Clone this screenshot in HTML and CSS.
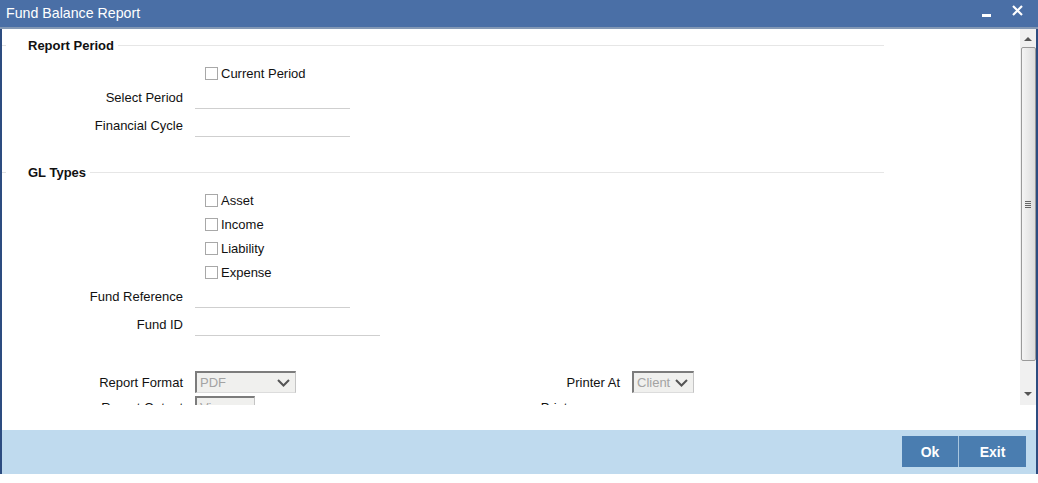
FILE: index.html
```html
<!DOCTYPE html>
<html>
<head>
<meta charset="utf-8">
<link rel="stylesheet" href="styles.css">
</head>
<body>
<div class="window">
  <div class="titlebar">
    <span class="title">Fund Balance Report</span>
    <div class="winctl">
      <span class="min"></span>
      <svg class="close" width="11" height="11" viewBox="0 0 11 11"><path d="M1 1 L10 10 M10 1 L1 10" stroke="#fff" stroke-width="2.2" fill="none"/></svg>
    </div>
  </div>
  <div class="body">
    <div class="scroll">
      <div class="content">
        <div class="legend l1"><span>Report Period</span></div>
        <div class="row cbrow first"><div class="lbl"></div><div class="field cbfield"><span class="cb"></span><span>Current Period</span></div></div>
        <div class="row inrow r-sel"><div class="lbl">Select Period</div><div class="input"></div></div>
        <div class="row inrow r-fin"><div class="lbl">Financial Cycle</div><div class="input"></div></div>

        <div class="legend l2"><span>GL Types</span></div>
        <div class="row cbrow gl1"><div class="lbl"></div><div class="field cbfield"><span class="cb"></span><span>Asset</span></div></div>
        <div class="row cbrow"><div class="lbl"></div><div class="field cbfield"><span class="cb"></span><span>Income</span></div></div>
        <div class="row cbrow"><div class="lbl"></div><div class="field cbfield"><span class="cb"></span><span>Liability</span></div></div>
        <div class="row cbrow"><div class="lbl"></div><div class="field cbfield"><span class="cb"></span><span>Expense</span></div></div>
        <div class="row inrow r-fref"><div class="lbl">Fund Reference</div><div class="input"></div></div>
        <div class="row inrow r-fid"><div class="lbl">Fund ID</div><div class="input wide"></div></div>

        <div class="row selrow r-fmt">
          <div class="lbl">Report Format</div>
          <div class="select w101"><span>PDF</span><svg class="chev" width="13" height="8" viewBox="0 0 13 8"><path d="M1 1 L6.5 6.5 L12 1" stroke="#555" stroke-width="2" fill="none"/></svg></div>
          <div class="lbl rlbl">Printer At</div>
          <div class="select w62"><span>Client</span><svg class="chev" width="13" height="8" viewBox="0 0 13 8"><path d="M1 1 L6.5 6.5 L12 1" stroke="#555" stroke-width="2" fill="none"/></svg></div>
        </div>
        <div class="row selrow r-out">
          <div class="lbl">Report Output</div>
          <div class="select w60"><span>View</span></div>
          <div class="lbl rlbl">Printer</div>
        </div>
      </div>
      <div class="vscroll">
        <div class="arrow up"></div>
        <div class="thumb"><div class="grip"></div></div>
        <div class="arrow down"></div>
      </div>
    </div>
    <div class="spacer"></div>
    <div class="footer">
      <button class="btn ok">Ok</button><button class="btn exit">Exit</button>
    </div>
  </div>
</div>
</body>
</html>
```
FILE: styles.css
```css
* { box-sizing: border-box; }
html, body { margin: 0; padding: 0; background: #fff; }
body { font-family: "Liberation Sans", Arial, sans-serif; font-size: 13px; color: #111; }

.window { width: 1038px; height: 474px; display: flex; flex-direction: column; }

.titlebar {
  height: 29px; flex: none; background: #4a6fa6; border-bottom: 2px solid #8398b4;
  display: flex; align-items: center; justify-content: space-between;
  padding: 0 0 0 6px; color: #fff;
}
.title { font-size: 14.2px; margin-top: -2px; }
.winctl { display: flex; align-items: center; height: 27px; }
.min { width: 9px; height: 3px; background: #fff; margin-right: 21px; position: relative; top: 2px; }
.close { margin-right: 15px; margin-top: -6px; }

.body {
  flex: 1; display: flex; flex-direction: column;
  border-left: 2px solid #2d4c80; border-right: 2px solid #2d4c80;
}
.scroll { height: 376px; flex: none; display: flex; }
.content { flex: 1; overflow: hidden; }
.spacer { height: 25px; flex: none; }
.footer {
  flex: 1; background: #bfdaee; display: flex; justify-content: flex-end;
  align-items: flex-start; padding: 6px 10px 0 0;
}
.btn {
  height: 31px; border: none; background: #4a7db0; color: #fff;
  font-family: "Liberation Sans", Arial, sans-serif; font-weight: bold; font-size: 14px;
  padding: 0; margin: 0;
}
.ok { width: 57px; border-right: 1px solid #a9c6df; }
.exit { width: 67px; }

/* legends */
.legend { height: 20px; display: flex; align-items: center; margin-right: 136px; font-weight: bold; }
.legend::before { content: ""; width: 4px; height: 1px; background: #e2e2e2; margin-right: 22px; }
.legend::after { content: ""; flex: 1; height: 1px; background: #e6e6e6; margin-left: 4px; }
.l1 { margin-top: 6px; }
.l2 { margin-top: 25px; }

.row { display: flex; align-items: center; }
.lbl { width: 181px; text-align: right; flex: none; }
.cbrow { height: 24px; }
.cbrow.first { height: 20px; margin-top: 8px; }
.cbrow.gl1 { margin-top: 6px; }
.cbfield { margin-left: 22px; display: flex; align-items: center; }
.cb { width: 13px; height: 13px; border: 1px solid #a8a8a8; background: #fff; margin-right: 3px; }

.inrow { height: 23px; }
.input { margin-left: 12px; width: 155px; height: 23px; border-bottom: 1px solid #cfcfcf; }
.input.wide { width: 185px; }
.r-sel { margin-top: 3px; }
.r-fin { margin-top: 5px; }
.r-fref { margin-top: 1px; }
.r-fid { margin-top: 5px; }

.selrow { height: 22px; }
.r-fmt { margin-top: 35px; }
.r-out { margin-top: 3px; }
.select {
  margin-left: 12px; height: 22px; background: #f0f0ee; color: #a3a3a3;
  border-top: 2px solid #7c7c7c; border-left: 2px solid #7c7c7c;
  border-right: 1px solid #c4c4c4; border-bottom: 1px solid #dcdcdc;
  display: flex; align-items: center; justify-content: space-between;
  padding: 0 5px 0 3px; font-size: 13px;
}
.w101 { width: 101px; }
.w62 { width: 62px; }
.w60 { width: 60px; }
.rlbl { width: 100px; margin-left: 224px; }

/* scrollbar */
.vscroll { width: 16px; background: #f0f0f0; display: flex; flex-direction: column; align-items: center; }
.arrow { width: 0; height: 0; border-left: 4px solid transparent; border-right: 4px solid transparent; }
.up { border-bottom: 4px solid #555; margin-top: 8px; }
.thumb {
  margin-top: 6px; width: 15px; height: 314px; border: 1px solid #9a9a9a; border-radius: 2px;
  background: linear-gradient(to right, #f4f4f4, #dcdcdc);
  display: flex; align-items: center; justify-content: center;
}
.grip { width: 6px; height: 7px; background: repeating-linear-gradient(#666 0 1px, transparent 1px 2px); }
.down { border-top: 4px solid #555; margin-top: 31px; }
```
